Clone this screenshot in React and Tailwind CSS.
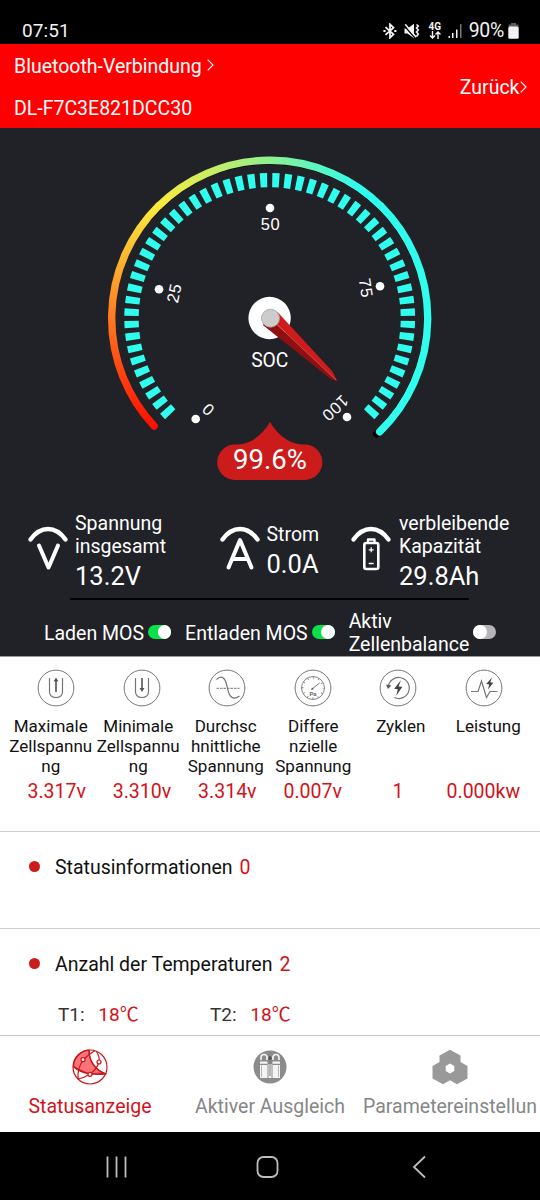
const CX = 269.7;
const CY = 190.3;

const polar = (r, deg) => {
  const a = (deg * Math.PI) / 180;
  return `${(CX + r * Math.cos(a)).toFixed(2)} ${(CY + r * Math.sin(a)).toFixed(2)}`;
};

const arc = (r, from, to) => `M${polar(r, from)}A${r} ${r} 0 ${to - from > 180 ? 1 : 0} 1 ${polar(r, to)}`;

const scale = [
  { label: '0', dot: [195.7, 291], text: [208, 281.5], rotate: -137 },
  { label: '25', dot: [159, 161.3], text: [174, 165], rotate: -78 },
  { label: '50', dot: [270, 80], text: [270.5, 96], rotate: 0 },
  { label: '75', dot: [380, 158.3], text: [366, 160], rotate: 81 },
  { label: '100', dot: [347, 289], text: [335.3, 280.3], rotate: 137 },
];

const cells = [
  { icon: 'max', label: ['Maximale', 'Zellspannu', 'ng'], value: '3.317v' },
  { icon: 'min', label: ['Minimale', 'Zellspannu', 'ng'], value: '3.310v' },
  { icon: 'avg', label: ['Durchsc', 'hnittliche', 'Spannung'], value: '3.314v' },
  { icon: 'diff', label: ['Differe', 'nzielle', 'Spannung'], value: '0.007v' },
  { icon: 'cycles', label: ['Zyklen'], value: '1' },
  { icon: 'power', label: ['Leistung'], value: '0.000kw' },
];

const StatusBar = () => (
  <div className="flex h-[44px] items-center bg-black pt-[17px] pr-[21px] pl-[22px] text-[#f2f2f2]">
    <span className="text-[19px] leading-6 tracking-[0.1px]">07:51</span>
    <div className="ml-auto flex items-center">
      <svg width="14" height="16" viewBox="0 0 14 16" fill="none" stroke="currentColor" strokeWidth="1.8" className="mr-[7px]">
        <path d="M2.5 4.2 10.5 11.3 7 14.7V1.3l3.5 3.4-8 7.1" />
        <path d="M.4 8h2.2M11.2 8h2.2" strokeWidth="2" />
      </svg>
      <svg width="16" height="16" viewBox="0 0 16 16" className="mr-[8px]">
        <path d="M.5 5.5h3L10 .8v14.4L3.5 10.5h-3z" fill="currentColor" />
        <path d="m0 2.5 11 12.5" stroke="#000" strokeWidth="1.3" />
        <path d="m1.2 1.2 11 13" stroke="currentColor" strokeWidth="1.5" />
        <path d="m12.5 1.5 1.8 1.5-1.8 2 1.8 2-1.8 2 1.8 2-1.8 2.5" fill="none" stroke="currentColor" strokeWidth="1.6" />
      </svg>
      <div className="mr-[6px] flex w-[14px] flex-col items-center">
        <span className="text-[10px] leading-[8px] font-bold">4G</span>
        <svg width="12" height="8" viewBox="0 0 12 8" fill="none" stroke="currentColor" strokeWidth="1.4">
          <path d="M3.5 0v7M1 4.5 3.5 7 6 4.5M9 8V1M6.5 3.5 9 1l2.500 2.5" />
        </svg>
      </div>
      <svg width="15" height="15" viewBox="0 0 15 15" fill="currentColor" className="mr-[6px]">
        <path d="M.5 13H2v2H.5zM4 10h1.500v5H4zM8 6.500h1.500V15H8z" />
        <path d="M12 1h1.500v14H12z" fill="#777" />
      </svg>
      <span className="text-[19.5px] leading-6 tracking-[-0.3px]">90%</span>
      <svg width="11" height="16" viewBox="0 0 11 16" className="ml-[4px]">
        <path d="M3 0h5v1.500h2.500V4H.5V1.500H3z" fill="#5c5c5c" />
        <rect x=".3" y="3.5" width="10.4" height="12.3" rx="1.5" fill="#f2f2f2" />
      </svg>
    </div>
  </div>
);

const Chevron = ({ className }) => (
  <svg width="7" height="12" viewBox="0 0 7 12" fill="none" stroke="#fff" strokeWidth="1.1" className={className}>
    <path d="m.7.7 5.3 5.3-5.3 5.3" />
  </svg>
);

const Header = () => (
  <header className="flex h-[84px] items-center justify-between bg-[#fe0000] pr-[13.5px] pl-[14px] text-[19.5px] leading-6 text-white">
    <div className="flex flex-col gap-[18px] pt-[4px]">
      <div className="flex items-center">
        Bluetooth-Verbindung
        <Chevron className="-mt-[4px] ml-[5px]" />
      </div>
      <span>DL-F7C3E821DCC30</span>
    </div>
    <div className="flex items-center pt-[4px]">
      Zurück
      <Chevron className="-mt-[3px]" />
    </div>
  </header>
);

const Gauge = () => (
  <svg width="540" height="372" viewBox="0 0 540 372" className="block">
    <defs>
      <linearGradient id="warm" gradientUnits="userSpaceOnUse" x1="0" y1="300" x2="0" y2="78">
        <stop offset="0" stopColor="#fe0d00" />
        <stop offset=".5" stopColor="#ff7a22" />
        <stop offset="1" stopColor="#fbea3c" />
      </linearGradient>
      <linearGradient id="cool" gradientUnits="userSpaceOnUse" x1="158" y1="0" x2="360" y2="0">
        <stop offset="0" stopColor="#fbea3c" />
        <stop offset=".55" stopColor="#8ff08f" />
        <stop offset="1" stopColor="#2ffdee" />
      </linearGradient>
    </defs>
    <g fill="none" strokeWidth="7.4">
      <path d={arc(157.5, 220, 407.2)} stroke="#000" strokeLinecap="round" />
      <path d={arc(158, 137, 225.3)} stroke="url(#warm)" strokeLinecap="round" />
      <path d={arc(158, 225, 315)} stroke="url(#cool)" />
      <path d={arc(158, 314.8, 405.9)} stroke="#2ffdee" strokeLinecap="round" />
    </g>
    <path d={arc(138.2, 136.05, 403.95)} pathLength="267.9" strokeDasharray="2.9 2.1" fill="none" stroke="#2ffdee" strokeWidth="14.4" />
    {scale.map((s) => (
      <g key={s.label} fill="#fff">
        <circle cx={s.dot[0]} cy={s.dot[1]} r="4.3" />
        <text
          transform={`translate(${s.text[0]} ${s.text[1]}) rotate(${s.rotate})`}
          y="5.8"
          textAnchor="middle"
          className="font-['Liberation_Sans',sans-serif] text-[16.5px] tracking-[0.6px]"
        >
          {s.label}
        </text>
      </g>
    ))}
    <circle cx="269.6" cy="190" r="21.2" fill="#fff" />
    <path d="M262.8 197 270 190l67.600 63.600-7.100-2.800z" fill="#8e1010" />
    <path d="M270 190 277.500 184 332 243l5.600 10.400z" fill="#cf1b1b" />
    <path d="m270 190 66 62" stroke="#e2635f" strokeWidth=".7" />
    <circle cx="270.5" cy="190.2" r="9" fill="#ccc" stroke="#a3a3a3" strokeWidth=".8" />
    <text x="269.8" y="238.5" textAnchor="middle" fill="#fff" className="text-[19.3px]">SOC</text>
    <path
      d="M270 294c6 10 16 21 31 22.500h3.700a17.700 17.700 0 0 1 0 35.400h-69.800a17.700 17.700 0 0 1 0-35.400h4.100c15-1.500 25-12.500 31-22.500z"
      fill="#cb1b1b"
    />
    <text x="270" y="340.5" textAnchor="middle" fill="#fff" className="text-[27.5px]">99.6%</text>
  </svg>
);

const MeterIcon = ({ type }) => (
  <svg width="42" height="46" viewBox="0 0 42 46" fill="none" stroke="#fff" strokeWidth="4.4" strokeLinecap="round" strokeLinejoin="round">
    <path d="M3.5 13.5C13.5-.5 28.500-.5 38.500 13.500" />
    {type === 'volt' && <path d="m12 19.500 9.500 22 9.500-22" strokeWidth="4" />}
    {type === 'amp' && <path d="M9.500 41.500 21 14l11.500 27.500M14 33h14" strokeWidth="4" />}
    {type === 'capacity' && (
      <>
        <rect x="14.3" y="17" width="14" height="26" rx="2" strokeWidth="2.6" />
        <path d="M18 15.500v-2h6.500v2" strokeWidth="2.4" />
        <path d="M18.700 23.800h5M21.200 21.300v5M18.700 37.500h5" strokeWidth="1.3" strokeLinecap="butt" />
      </>
    )}
  </svg>
);

const Toggle = ({ on }) => (
  <span className={`-mt-[2px] flex h-[14px] w-[23px] items-center rounded-full ${on ? 'justify-end bg-[#0be04c]' : 'justify-start bg-[#b5b5b5]'}`}>
    <span className="size-[13.5px] rounded-full bg-white" />
  </span>
);

const Summary = () => (
  <div className="text-[19.5px] leading-[23px] text-white">
    <div className="flex h-[98px] items-center pl-[26.5px]">
      <MeterIcon type="volt" />
      <div className="mt-[5px] ml-[6.5px] w-[143.5px]">
        <p>Spannung<br />insgesamt</p>
        <p className="mt-[3px] text-[25.5px] leading-[30px]">13.2V</p>
      </div>
      <MeterIcon type="amp" />
      <div className="mt-[4px] ml-[6px] w-[83px]">
        <p>Strom</p>
        <p className="mt-[3px] text-[25.5px] leading-[30px]">0.0A</p>
      </div>
      <MeterIcon type="capacity" />
      <div className="mt-[5px] ml-[7.5px]">
        <p>verbleibende<br />Kapazität</p>
        <p className="mt-[3px] text-[25.5px] leading-[30px]">29.8Ah</p>
      </div>
    </div>
    <div className="ml-[70px] h-[2px] w-[399px] bg-black" />
    <div className="flex h-[56px] items-center pt-[10px] pl-[44px]">
      <span className="mr-[4px] whitespace-nowrap">Laden MOS</span>
      <Toggle on />
      <span className="mr-[4px] ml-[14px] whitespace-nowrap">Entladen MOS</span>
      <Toggle on />
      <span className="mr-[4px] ml-[14px]">Aktiv<br />Zellenbalance</span>
      <Toggle />
    </div>
  </div>
);

const CellIcon = ({ type }) => (
  <svg width="38" height="38" viewBox="0 0 38 38" fill="none" stroke="#757575" strokeWidth="1.2" className="justify-self-center">
    <circle cx="19" cy="19" r="17.9" strokeWidth="1" stroke="#777" />
    {type === 'max' && (
      <>
        <path d="M12.500 9v13.500q0 6 6.500 6t6.500-6V9" />
        <path d="M19 23V11" strokeWidth="2" />
        <path d="m16.500 12.500 2.500-4 2.500 4z" fill="#555" stroke="none" />
      </>
    )}
    {type === 'min' && (
      <>
        <path d="M12.500 9v13.500q0 6 6.500 6t6.500-6V9" />
        <path d="M19 9v11" strokeWidth="2" />
        <path d="m16.500 19 2.500 4 2.500-4z" fill="#555" stroke="none" />
      </>
    )}
    {type === 'avg' && (
      <>
        <path d="M8.500 10.500C14 5 17.500 10 19 17c1.500 8 4 16 12.500 10" />
        <path d="M8.500 19.300h23" strokeDasharray="2.5 1" strokeWidth="1" />
      </>
    )}
    {type === 'diff' && (
      <>
        <circle cx="19" cy="19" r="11.5" strokeWidth=".9" />
        <circle cx="19" cy="19" r="10.2" strokeWidth="1.8" strokeDasharray=".8 4.541" strokeDashoffset=".4" />
        <path d="m18 20 7.500-6" strokeWidth="1" />
        <path d="m17 21 1-2.500 2 1.500z" fill="#555" stroke="none" />
        <text x="19" y="27" textAnchor="middle" fill="#666" stroke="none" className="text-[6px] font-bold">Pa</text>
      </>
    )}
    {type === 'cycles' && (
      <>
        <path d="M9.300 18a10.500 10.500 0 1 1 6 10.500" />
        <path d="m7 15.500 2 4.500 3.300-3.500z" fill="#555" stroke="none" />
        <path d="m22 11-6.800 8.700 3.600.5-1.600 6.500 6.200-8.900-3.800-.4z" fill="#444" stroke="none" />
      </>
    )}
    {type === 'power' && (
      <>
        <path d="M6 22.500h7l3.500-10.500 5 16.500 3.500-6h7.500" />
        <path d="m27 8.500-5.800 6.500 3 .5-1.200 5 5.300-6.800-3-.4z" fill="#444" stroke="none" />
      </>
    )}
  </svg>
);

const CellStats = () => (
  <section className="h-[175px] border-t border-[#9a9a9a] bg-white pt-[12px]">
    <div className="grid grid-cols-6 pr-[13.5px] pl-[13.5px]">
      {cells.map((c) => <CellIcon key={c.icon} type={c.icon} />)}
    </div>
    <div className="mt-[8.5px] grid h-[60px] grid-cols-6 pr-[8px] pl-[7px] text-center text-[17px] leading-[20px] text-[#111]">
      {cells.map((c) => (
        <div key={c.icon} className="flex flex-col items-center whitespace-nowrap">
          {c.label.map((line) => <span key={line}>{line}</span>)}
        </div>
      ))}
    </div>
    <div className="mt-[4.5px] grid grid-cols-6 px-[14px] text-center text-[19.5px] leading-6 text-[#d31219]">
      {cells.map((c) => <span key={c.icon}>{c.value}</span>)}
    </div>
  </section>
);

const InfoTitle = ({ title, value }) => (
  <div className="flex items-center text-[19.5px] leading-6 text-[#111]">
    <span className="-mt-[3px] mr-[15px] size-[11px] rounded-full bg-[#cb1b1b]" />
    {title}
    <span className="ml-[7px] text-[#d31219]">{value}</span>
  </div>
);

const InfoSections = () => (
  <div className="bg-white">
    <section className="h-[97px] border-t border-[#cfcfcf] pt-[24px] pl-[29px]">
      <InfoTitle title="Statusinformationen" value="0" />
    </section>
    <section className="h-[107px] border-t border-[#cfcfcf] pt-[24px] pl-[29px]">
      <InfoTitle title="Anzahl der Temperaturen" value="2" />
      <div className="mt-[26px] flex pl-[29px] text-[19px] leading-6 text-[#333]">
        <p className="w-[152px]">T1: <span className="ml-[9px] text-[#d31219]">18℃</span></p>
        <p>T2: <span className="ml-[9px] text-[#d31219]">18℃</span></p>
      </div>
    </section>
  </div>
);

const StatusTabIcon = () => (
  <svg width="36" height="36" viewBox="0 0 36 36" fill="none" stroke="#c8171d" strokeWidth="1.2">
    <path d="M1.500 17A16.900 16.900 0 0 1 17 1.200C17 12 23 21 34 25c-6-1-11-1-16 0C12 23 6 21 1.500 17z" fill="#fc7378" />
    <circle cx="18" cy="18" r="17" />
    <path d="M17 1.200C17 12 23 21 34 25M1.200 17.500C6 22 12 24 18 25q8 1 16.500-.2M11 11C7 17 5.500 23 6 30M11 11q5-5 12-9.500M27 13Q28 8 24.500 2.500M27 13Q25 20 18 25M18 25Q12 29 6 30" />
    <g fill="#fff">
      <circle cx="11" cy="10.7" r="2" />
      <circle cx="27" cy="13" r="2" />
      <circle cx="18" cy="25.3" r="2" />
    </g>
  </svg>
);

const BalanceTabIcon = () => (
  <svg width="36" height="36" viewBox="0 0 36 36" fill="none">
    <circle cx="18" cy="18" r="16.5" fill="#8b8b8b" />
    <g fill="#f4f4f4">
      <path d="M8 12.500h7.500V29H8zM20.500 12.500H28V29h-7.500zM16.500 15h3v14h-3z" />
    </g>
    <path d="M8 15.300h7.500M20.500 15.300H28" stroke="#8b8b8b" strokeWidth="1.2" />
    <path d="M9.500 16.500v11.500M26.500 16.500v11.500" stroke="#b5b5b5" strokeWidth="1" />
    <path d="M9 11V8.500q0-3 3-3t3 3V11M21 11V8.500q0-3 3-3t3 3V11M15 8.500h6" stroke="#f4f4f4" strokeWidth="1.6" />
    <circle cx="18" cy="9" r="2" fill="#555" />
    <path d="M18 11v16" stroke="#777" strokeWidth="1" />
  </svg>
);

const ParamTabIcon = () => (
  <svg width="36" height="36" viewBox="0 0 36 36">
    <path d="M18 .8 28.500 6.500V13l7 4v12.500L25 35.300l-7-4-7 4L.5 29.500V17l7-4V6.500z" fill="#999" />
    <path d="m18 14.500 4.300 2.500v5L18 24.500 13.700 22v-5z" fill="#fff" />
  </svg>
);

const TabBar = () => (
  <nav className="grid h-[97px] grid-cols-3 border-t border-[#c4c4c4] bg-white text-[19.5px] leading-6 text-[#868686]">
    <div className="flex flex-col items-center pt-[13px] text-[#d31219]">
      <StatusTabIcon />
      <span className="mt-[9.5px]">Statusanzeige</span>
    </div>
    <div className="flex flex-col items-center pt-[13px]">
      <BalanceTabIcon />
      <span className="mt-[9.5px] whitespace-nowrap">Aktiver Ausgleich</span>
    </div>
    <div className="flex flex-col items-center pt-[13px]">
      <ParamTabIcon />
      <span className="mt-[9.5px] whitespace-nowrap">Parametereinstellun</span>
    </div>
  </nav>
);

const SystemNav = () => (
  <div className="flex h-[68px] items-center bg-black text-[#bdbdbd]">
    <svg width="540" height="68" viewBox="0 0 540 68" fill="none" stroke="currentColor" strokeWidth="1.8">
      <path d="M107.500 24.500v21M116.500 24.500v21M125.500 24.500v21" />
      <rect x="257.5" y="25" width="20" height="20" rx="6" />
      <path d="m425 24.500-11 10.500 11 10.500" />
    </svg>
  </div>
);

const App = () => (
  <div className="h-[1200px] w-[540px] overflow-hidden bg-white font-[Roboto,'Noto_Sans_CJK_SC',sans-serif]">
    <StatusBar />
    <Header />
    <main className="h-[528px] bg-[#212228]">
      <Gauge />
      <Summary />
    </main>
    <CellStats />
    <InfoSections />
    <TabBar />
    <SystemNav />
  </div>
);

export default App;
